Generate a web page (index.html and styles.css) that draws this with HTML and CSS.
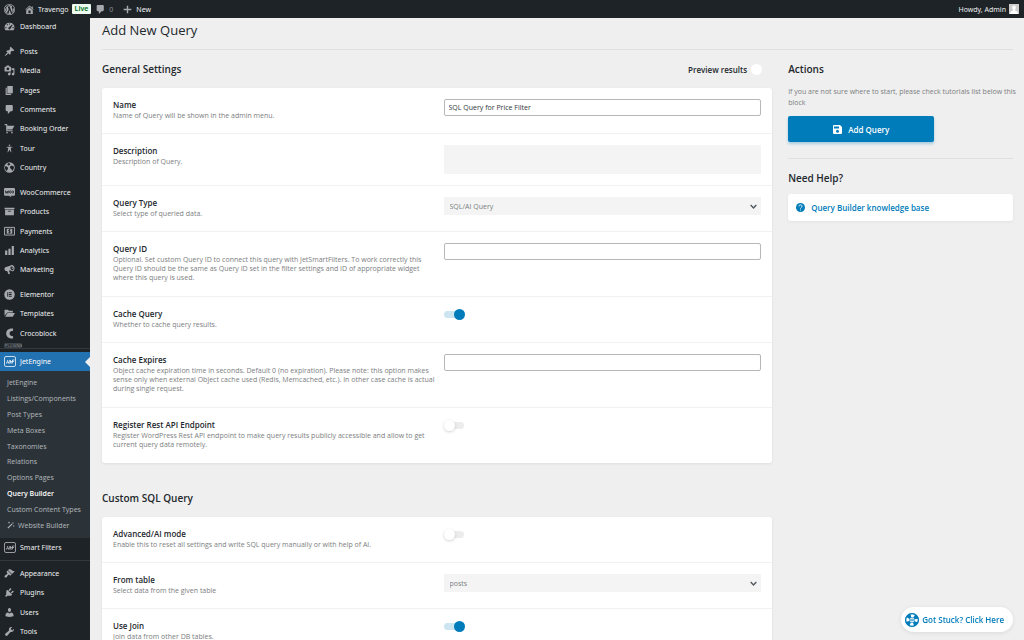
FILE: index.html
```html
<!DOCTYPE html>
<html lang="en">
<head>
<meta charset="utf-8">
<title>Add New Query</title>
<link rel="stylesheet" href="styles.css">
</head>
<body>
<header class="topbar">
  <a class="top-item" href="#" aria-label="WordPress"><svg class="icon top-logo" viewBox="0 0 20 20"><path fill-rule="evenodd" d="M10 0a10 10 0 1 0 0 20 10 10 0 0 0 0-20zm0 1.200a8.800 8.800 0 1 1 0 17.600A8.800 8.800 0 0 1 10 1.200z"/><path d="M2.900 6.800l4 10.800A8 8 0 0 1 2.900 6.800zM4 5.300a8 8 0 0 1 11.300-1.200c-1.300.2-1.700 1.600-1 2.900.8 1.300 1.400 2.400.7 4.700l-1 3.200-3.300-9.500 1-.2v-.6l-5.900.1v.5l1.200.2 1.500 4-2 5.800L3.600 5.900l1-.1zM10.200 10.900l2.500 6.800a8 8 0 0 1-4.900.1zM17 6.200a8 8 0 0 1-3 10.700l2.500-7.100c.4-1.300.6-2.400.5-3.600z"/></svg></a>
  <a class="top-item" href="#"><svg class="icon" viewBox="0 0 20 20"><path d="M16 8.500l1.530 1.530-1.060 1.060L10 4.600l-6.470 6.490-1.060-1.060L10 2.500l4 4v-2h2v4zm-6-2.460l6 5.990V18H4v-5.970zM12 17v-5H8v5h4z"/></svg>Travengo</a>
  <span class="live">Live</span>
  <a class="top-item top-count" href="#"><svg class="icon" viewBox="0 0 20 20"><path d="M5 2h9c1.100 0 2 .9 2 2v7c0 1.100-.9 2-2 2h-2l-5 5v-5H5c-1.100 0-2-.9-2-2V4c0-1.100.9-2 2-2z"/></svg>0</a>
  <a class="top-item top-new" href="#"><svg class="icon" viewBox="0 0 20 20"><path d="M8.700 3h2.600v5.700H17v2.600h-5.700V17H8.700v-5.700H3V8.700h5.700z"/></svg>New</a>
  <a class="top-item top-user" href="#">Howdy, Admin<svg class="avatar" viewBox="0 0 20 20"><path fill="#ccc" d="M0 0h20v20H0z"/><path fill="#fff" d="M10 3c3 0 4 2.200 3.500 5-.3 1.800-1 3-1.800 3.500v1.500c3 .8 6 2 6.300 7H2c.3-5 3.300-6.200 6.300-7v-1.500C7.500 11 6.800 9.800 6.500 8 6 5.200 7 3 10 3z"/></svg></a>
</header>

<div class="shell">
<nav class="sidebar" aria-label="Admin menu">
  <div class="group group-first">
    <a class="item" href="#"><svg class="icon" viewBox="0 0 20 20"><path fill-rule="evenodd" d="M10 3a9 9 0 0 0-9 9c0 2 .6 3.600 1.600 5h14.800c1-1.400 1.600-3 1.600-5a9 9 0 0 0-9-9zM9 4.500h2v2H9zM4.500 7l1.400-1.400L7.300 7 5.900 8.400zM2.500 11h2v2h-2zM15.500 11h2v2h-2zM14.800 6.300l1 1-4 6.200a2 2 0 1 1-2.700-2.300z"/></svg>Dashboard</a>
  </div>
  <div class="group group-content">
    <a class="item" href="#"><svg class="icon" viewBox="0 0 20 20"><path d="M10.440 3.020l1.820-1.820 6.360 6.350-1.830 1.820c-1.050-.68-2.480-.57-3.410.36l-.75.75c-.92.93-1.040 2.350-.35 3.410l-1.830 1.820-2.410-2.410-2.800 2.790c-.42.42-3.380 2.710-3.800 2.290s1.860-3.390 2.280-3.810l2.790-2.790L4.100 9.360l1.830-1.820c1.050.69 2.480.57 3.400-.36l.75-.75c.93-.92 1.050-2.350.36-3.410z"/></svg>Posts</a>
    <a class="item" href="#"><svg class="icon" viewBox="0 0 20 20"><path fill-rule="evenodd" d="M13 11V4c0-.55-.45-1-1-1h-1.670L9 1H5L3.670 3H2c-.55 0-1 .45-1 1v7c0 .55.45 1 1 1h10c.55 0 1-.45 1-1zM7 4.500c1.380 0 2.500 1.120 2.500 2.500S8.380 9.500 7 9.500 4.500 8.380 4.500 7 5.620 4.500 7 4.500zM14 6h5v10.500c0 1.380-1.120 2.500-2.500 2.500S14 17.880 14 16.500s1.120-2.500 2.500-2.500c.17 0 .34.02.5.05V9h-3V6zm-4 8.050V13h2v3.500c0 1.380-1.120 2.500-2.500 2.500S7 17.880 7 16.500 8.120 14 9.500 14c.17 0 .34.02.5.05z"/></svg>Media</a>
    <a class="item" href="#"><svg class="icon" viewBox="0 0 20 20"><path d="M6 15V2h10v13H6zm-1 1h8v2H3V5h2v11z"/></svg>Pages</a>
    <a class="item" href="#"><svg class="icon" viewBox="0 0 20 20"><path d="M5 2h9c1.100 0 2 .9 2 2v7c0 1.100-.9 2-2 2h-2l-5 5v-5H5c-1.100 0-2-.9-2-2V4c0-1.100.9-2 2-2z"/></svg>Comments</a>
    <a class="item" href="#"><svg class="icon" viewBox="0 0 20 20"><path d="M6 13h9c.55 0 1 .45 1 1s-.45 1-1 1H5c-.55 0-1-.45-1-1V4H2c-.55 0-1-.45-1-1s.45-1 1-1h3c.55 0 1 .45 1 1v2h13l-4 7H6v1zm-.5 3c.83 0 1.500.67 1.500 1.500S6.330 19 5.500 19 4 18.330 4 17.500 4.670 16 5.500 16zm9 0c.83 0 1.500.67 1.500 1.500s-.67 1.500-1.500 1.500-1.500-.67-1.500-1.500.67-1.500 1.500-1.500z"/></svg>Booking Order</a>
    <a class="item" href="#"><svg class="icon" viewBox="0 0 20 20"><path d="M10 2.600c.83 0 1.500.67 1.500 1.500s-.67 1.510-1.500 1.510c-.82 0-1.500-.68-1.500-1.510s.68-1.500 1.500-1.500zM3.400 7.360c0-.65 6.600-.76 6.600-.76s6.600.11 6.600.76-4.470 1.400-4.470 1.400 1.690 8.140 1.060 8.380c-.62.24-3.190-5.190-3.190-5.190s-2.560 5.430-3.180 5.190c-.63-.24 1.060-8.380 1.060-8.380S3.400 8.010 3.400 7.360z"/></svg>Tour</a>
    <a class="item" href="#"><svg class="icon" viewBox="0 0 20 20"><circle cx="10" cy="10" r="9.500"/><path fill="#1d2327" d="M2 7.500l3 .5 2.500 2.500-.5 2.500-1.500 1.500.3 2.500A9 9 0 0 1 2 7.500zM8 2l3 .5.500 2L9 6.500 7 6 6 4zM11 8l3-1.500 3.500 1 .7 3-1.700 4-2 1.500-1-3-2.500-2z"/></svg>Country</a>
  </div>
  <div class="group group-shop">
    <a class="item" href="#"><svg class="icon" viewBox="0 0 20 20"><path d="M2 2h16a2 2 0 0 1 2 2v10a2 2 0 0 1-2 2h-6l2 3-5-3H2a2 2 0 0 1-2-2V4a2 2 0 0 1 2-2z"/><path fill="none" stroke="#1d2327" stroke-width="1.500" d="M2.500 6.500l1 5L6 7.500l1 4 1.500-5"/><ellipse cx="11.500" cy="9" rx="1.500" ry="2.300" fill="none" stroke="#1d2327" stroke-width="1.300"/><ellipse cx="16" cy="9" rx="1.500" ry="2.300" fill="none" stroke="#1d2327" stroke-width="1.300"/></svg>WooCommerce</a>
    <a class="item" href="#"><svg class="icon" viewBox="0 0 20 20"><path fill-rule="evenodd" d="M19 3v3H1V3h18zM2 7h16v10H2V7zm11 3V8.500H7V10h6z"/></svg>Products</a>
    <a class="item" href="#"><svg class="icon" viewBox="0 0 20 20"><path fill="none" stroke="#a7aaad" stroke-width="1.800" d="M1 2.500h18v14H1z"/><path d="M5 5h10v9H5z"/><path fill="none" stroke="#1d2327" stroke-width="1.500" d="M12 7H9.500a1.200 1.200 0 0 0 0 2.500h1a1.200 1.200 0 0 1 0 2.500H8M10 5.500v8"/></svg>Payments</a>
    <a class="item" href="#"><svg class="icon" viewBox="0 0 20 20"><path d="M18 18V2h-4v16h4zm-6 0V7H8v11h4zm-6 0v-8H2v8h4z"/></svg>Analytics</a>
    <a class="item" href="#"><svg class="icon" viewBox="0 0 20 20"><path fill-rule="evenodd" d="M11 3c3-2 6-1 7.500 2s.5 7-2 8c-2 .7-4-.3-5-1.500l-2.500.6 2 5.500-2.800 1-2.500-6C3 13 1.500 12 1 10S1.500 6 4 5.500zm2 1.500c-1.500.7-1.500 3-.8 4.600s2 2.900 3.600 2.300c1.500-.7 1.800-3 1-4.800S14.500 4 13 4.500zM14 6.500l2 .5-.2 2-1.500.5z"/></svg>Marketing</a>
  </div>
  <div class="group group-build">
    <a class="item" href="#"><svg class="icon" viewBox="0 0 20 20"><circle cx="10" cy="10" r="9.500"/><path fill="#1d2327" d="M6 6h1.700v8H6zM9 6h5v1.600H9zM9 9.200h5v1.600H9zM9 12.400h5V14H9z"/></svg>Elementor</a>
    <a class="item" href="#"><svg class="icon" viewBox="0 0 20 20"><path d="M1 14V3h6l2 2h7v3H6zM6.500 9H20l-4 7H2z"/></svg>Templates</a>
    <a class="item" href="#"><svg class="icon" viewBox="0 0 20 20"><path d="M16.500 1C9 .5 4 4 4 10s5 9.500 12.500 9v-4C13 15 10 13.500 10 10s3-5 6.500-5z"/></svg>Crocoblock</a>
  </div>
  <div class="divider-label"><span>PLUGINS</span></div>
  <a class="item item-current" href="#"><svg class="icon icon-jet" viewBox="0 0 24 22"><rect x="1" y="1" width="22" height="20" rx="3"/><path d="M4 14h2l1.500-6M8 14h4.500V8L8 14M12 11h4M13 14h4M17 14V8h4M17 11h3"/></svg>JetEngine</a>
  <div class="submenu">
    <a href="#">JetEngine</a>
    <a href="#">Listings/Components</a>
    <a href="#">Post Types</a>
    <a href="#">Meta Boxes</a>
    <a href="#">Taxonomies</a>
    <a href="#">Relations</a>
    <a href="#">Options Pages</a>
    <a class="sub-current" href="#">Query Builder</a>
    <a href="#">Custom Content Types</a>
    <a class="sub-wand" href="#"><svg class="wand" viewBox="0 0 20 20"><path d="M1 17L12 6l2 2L3 19zM13 5l2-2 2 2-2 2zM5 1l1 2 2 1-2 1-1 2-1-2-2-1 2-1zM17 10l.8 1.700 1.700.8-1.700.8L17 15l-.8-1.700-1.700-.8 1.700-.8z"/></svg>Website Builder</a>
  </div>
  <a class="item" href="#"><svg class="icon icon-jet" viewBox="0 0 24 22"><rect x="1" y="1" width="22" height="20" rx="3"/><path d="M4 14h2l1.500-6M8 14h4.500V8L8 14M12 11h4M13 14h4M17 14V8h4M17 11h3"/></svg>Smart Filters</a>
  <div class="rule"></div>
  <div class="group group-admin">
    <a class="item" href="#"><svg class="icon" viewBox="0 0 20 20"><path d="M14.480 11.060L7.410 3.990l1.500-1.500c.5-.56 2.300-.47 3.510.32 1.210.8 1.430 1.280 2.910 2.100 1.180.64 2.450 1.260 4.450.85zm-.71.71L6.700 4.700 4.930 6.470c-.39.39-.39 1.020 0 1.410l1.060 1.060c.39.39.39 1.030 0 1.420-.6.6-1.430 1.110-2.210 1.690-.35.26-.7.53-1.010.84C1.430 14.230.4 16.080 1.400 17.070c.99 1 2.840-.03 4.180-1.360.31-.31.58-.66.85-1.020.57-.78 1.080-1.610 1.690-2.210.39-.39 1.020-.39 1.410 0l1.060 1.060c.39.39 1.020.39 1.410 0z"/></svg>Appearance</a>
    <a class="item" href="#"><svg class="icon" viewBox="0 0 20 20"><path d="M13.110 4.360L9.870 7.600 8 5.730l3.240-3.240c.35-.34 1.050-.2 1.560.32.52.51.66 1.210.31 1.550zm-8 1.770l.91-1.120 9.010 9.010-1.190.84c-.71.71-2.630 1.160-3.820 1.160H6.140L4.900 17.260c-.59.59-1.540.59-2.120 0-.59-.58-.59-1.530 0-2.120l1.240-1.240v-3.880c0-1.130.4-3.190 1.090-3.890zm7.260 3.970l3.240-3.240c.34-.35 1.040-.21 1.550.31.52.51.66 1.210.31 1.550l-3.240 3.250z"/></svg>Plugins</a>
    <a class="item" href="#"><svg class="icon" viewBox="0 0 20 20"><path d="M10 9.250c-2.270 0-2.730-3.440-2.730-3.440C7 4.020 7.820 2 9.970 2c2.160 0 2.980 2.020 2.710 3.810 0 0-.41 3.440-2.680 3.440zm0 2.570L12.720 10c2.390 0 4.520 2.330 4.520 4.530v2.490s-3.650 1.130-7.240 1.130c-3.650 0-7.240-1.130-7.240-1.130v-2.490c0-2.250 1.940-4.480 4.470-4.480z"/></svg>Users</a>
    <a class="item" href="#"><svg class="icon" viewBox="0 0 20 20"><path d="M16.680 9.770c-1.340 1.340-3.300 1.670-4.950.99l-5.410 6.520c-.99.99-2.590.99-3.580 0s-.99-2.590 0-3.570l6.520-5.420c-.68-1.650-.35-3.610.99-4.950 1.280-1.280 3.120-1.620 4.720-1.060l-2.890 2.890 2.820 2.820 2.860-2.870c.53 1.580.18 3.390-1.080 4.650z"/></svg>Tools</a>
  </div>
</nav>

<main class="page">
  <h1 class="page-title">Add New Query</h1>
  <div class="columns">
    <div class="settings">
      <div class="section-head">
        <h2 class="heading">General Settings</h2>
        <label class="preview">Preview results<input class="switch switch-bare" type="checkbox"></label>
      </div>
      <section class="card">
        <div class="row">
          <div class="info"><label class="name" for="q-name">Name</label><p class="desc">Name of Query will be shown in the admin menu.</p></div>
          <div class="control"><input class="text" id="q-name" type="text" value="SQL Query for Price Filter"></div>
        </div>
        <div class="row">
          <div class="info"><label class="name" for="q-desc">Description</label><p class="desc">Description of Query.</p></div>
          <div class="control"><textarea class="area" id="q-desc"></textarea></div>
        </div>
        <div class="row">
          <div class="info"><label class="name" for="q-type">Query Type</label><p class="desc">Select type of queried data.</p></div>
          <div class="control"><span class="select-wrap"><select class="select" id="q-type"><option>SQL/AI Query</option></select><svg class="chevron" viewBox="0 0 10 6"><path d="M1 1l4 4 4-4"/></svg></span></div>
        </div>
        <div class="row row-long">
          <div class="info"><label class="name" for="q-id">Query ID</label><p class="desc">Optional. Set custom Query ID to connect this query with JetSmartFilters. To work correctly this Query ID should be the same as Query ID set in the filter settings and ID of appropriate widget where this query is used.</p></div>
          <div class="control"><input class="text" id="q-id" type="text"></div>
        </div>
        <div class="row">
          <div class="info"><label class="name" for="q-cache">Cache Query</label><p class="desc">Whether to cache query results.</p></div>
          <div class="control"><input class="switch" id="q-cache" type="checkbox" checked></div>
        </div>
        <div class="row row-long">
          <div class="info"><label class="name" for="q-exp">Cache Expires</label><p class="desc">Object cache expiration time in seconds. Default 0 (no expiration). Please note: this option makes sense only when external Object cache used (Redis, Memcached, etc.). In other case cache is actual during single request.</p></div>
          <div class="control"><input class="text" id="q-exp" type="text"></div>
        </div>
        <div class="row">
          <div class="info"><label class="name" for="q-rest">Register Rest API Endpoint</label><p class="desc">Register WordPress Rest API endpoint to make query results publicly accessible and allow to get current query data remotely.</p></div>
          <div class="control"><input class="switch" id="q-rest" type="checkbox"></div>
        </div>
      </section>

      <div class="section-head section-next">
        <h2 class="heading">Custom SQL Query</h2>
      </div>
      <section class="card">
        <div class="row">
          <div class="info"><label class="name" for="s-adv">Advanced/AI mode</label><p class="desc">Enable this to reset all settings and write SQL query manually or with help of AI.</p></div>
          <div class="control"><input class="switch" id="s-adv" type="checkbox"></div>
        </div>
        <div class="row">
          <div class="info"><label class="name" for="s-from">From table</label><p class="desc">Select data from the given table</p></div>
          <div class="control"><span class="select-wrap"><select class="select" id="s-from"><option>posts</option></select><svg class="chevron" viewBox="0 0 10 6"><path d="M1 1l4 4 4-4"/></svg></span></div>
        </div>
        <div class="row">
          <div class="info"><label class="name" for="s-join">Use Join</label><p class="desc">Join data from other DB tables.</p></div>
          <div class="control"><input class="switch" id="s-join" type="checkbox" checked></div>
        </div>
      </section>
    </div>

    <aside class="aside">
      <div class="section-head"><h2 class="heading">Actions</h2></div>
      <p class="hint">If you are not sure where to start, please check tutorials list below this block</p>
      <button class="add" type="button"><svg class="save" viewBox="0 0 18 18"><path fill-rule="evenodd" d="M2 0h12l4 4v12a2 2 0 0 1-2 2H2a2 2 0 0 1-2-2V2a2 2 0 0 1 2-2zm0 3v4h10V3zm7 6.500a3 3 0 1 0 0 6 3 3 0 0 0 0-6z"/></svg>Add Query</button>
      <h2 class="heading help-title">Need Help?</h2>
      <a class="help" href="#"><svg class="question" viewBox="0 0 20 20"><circle cx="10" cy="10" r="10" fill="#007cba"/><path fill="none" stroke="#fff" stroke-width="2" d="M6.500 7.500c0-4.500 7-4.500 7 0 0 2.500-3.500 2.500-3.500 5"/><circle cx="10" cy="15.500" r="1.300" fill="#fff"/></svg>Query Builder knowledge base</a>
    </aside>
  </div>
</main>
</div>

<button class="stuck" type="button"><svg class="buoy" viewBox="0 0 28 28"><circle cx="14" cy="14" r="14" fill="#007cba"/><circle cx="14" cy="14" r="9" fill="none" stroke="#fff" stroke-width="6" stroke-dasharray="7.070 7.070" stroke-dashoffset="3.530"/><circle cx="14" cy="14" r="12.500" fill="none" stroke="#007cba" stroke-width="2"/><circle cx="14" cy="14" r="5" fill="#fff"/><path fill="none" stroke="#007cba" stroke-width="1.500" d="M10 12.500h8M10 15.500h8"/></svg>Got Stuck? Click Here</button>
</body>
</html>
```
FILE: styles.css
```css
* { box-sizing: border-box; }
body {
  margin: 0;
  height: 100vh;
  overflow: hidden;
  display: flex;
  flex-direction: column;
  background: #efefef;
  color: #3c434a;
  font-family: "Open Sans", "Noto Sans", sans-serif;
  font-size: 7px;
}
a { color: inherit; text-decoration: none; }
h1, h2, p { margin: 0; }
button, input, textarea, select { font: inherit; margin: 0; }

.topbar {
  flex: none;
  display: flex;
  align-items: center;
  height: 18px;
  padding: 0 5px 0 4px;
  background: #1d2327;
  color: #f0f0f1;
  font-family: "Noto Sans", sans-serif;
}
.top-item { display: flex; align-items: center; gap: 3px; }
.top-item + .top-item { margin-left: 9px; }
.icon { flex: none; width: 11px; height: 11px; fill: #a7aaad; }
.live {
  margin: 0 4px 0 3px;
  padding: 0 3px;
  border-radius: 1px;
  background: #edfaef;
  color: #00701a;
  font-weight: 600;
  line-height: 10px;
}
.top-count { color: #8c8f94; }
.top-item.top-user { margin-left: auto; gap: 3px; }
.avatar { width: 10px; height: 10px; }

.shell { flex: 1; min-height: 0; display: flex; }
.sidebar {
  flex: none;
  width: 90px;
  background: #1d2327;
  color: #f0f0f1;
  font-family: "Noto Sans", sans-serif;
}
.group { display: flex; flex-direction: column; margin-bottom: 6px; }
.group .item { flex: 1; }
.group-content { min-height: 135px; }
.group-shop { min-height: 96px; }
.group-build { min-height: 58px; margin-bottom: 0; }
.group-admin { min-height: 77px; }
.item {
  display: flex;
  align-items: center;
  gap: 5px;
  min-height: 19px;
  padding-left: 4px;
}
.group-first .item { margin-top: -1px; }
.icon-jet { width: 12px; margin-right: -1px; fill: none; stroke: #c3c4c7; stroke-width: 1.5; }
.divider-label {
  height: 9px;
  padding-left: 4px;
  color: #a7aaad;
  font-size: 4px;
}
.divider-label span {
  display: block;
  width: 18px;
  border: 1px solid #3c434a;
  border-radius: 1px;
  line-height: 3px;
  text-align: center;
}
.divider-label::after { content: ""; display: block; height: 1px; margin-left: -4px; background: #32383d; }
.item-current { position: relative; background: #2271b1; color: #fff; }
.item-current .icon-jet { stroke: #fff; }
.item-current::after {
  content: "";
  position: absolute;
  right: 0;
  top: 5px;
  border: 5px solid transparent;
  border-right-color: #efefef;
  border-left: 0;
}
.submenu {
  display: flex;
  flex-direction: column;
  min-height: 167px;
  padding: 4px 0 5px;
  background: #2c3338;
  color: #b4b9be;
  font-family: "Open Sans", "Noto Sans", sans-serif;
}
.submenu a { flex: 1; display: flex; align-items: center; padding-left: 7px; white-space: nowrap; }
.submenu .sub-current { color: #fff; font-weight: 600; }
.wand { width: 8px; height: 8px; margin-right: 3px; fill: #b4b9be; }
.rule { height: 1px; margin: 3px 0; background: #32383d; }

.page { flex: 1; min-width: 0; padding: 0 11px 0 12px; }
.page-title {
  padding: 3px 0 10px;
  border-bottom: 1px solid #e0e0e0;
  color: #23282d;
  font-size: 13px;
  font-weight: 400;
  line-height: 18px;
}
.columns { display: grid; grid-template-columns: 149fr 50fr; gap: 16px; }
.section-head {
  display: flex;
  align-items: center;
  justify-content: space-between;
  height: 38px;
}
.section-next { height: 54px; padding-top: 16px; }
.heading { color: #23282d; font-size: 10px; font-weight: 600; line-height: 14px; }
.preview { display: flex; align-items: center; gap: 4px; padding-right: 10px; color: #23282d; font-size: 8px; font-weight: 600; }

.card { border-radius: 3px; background: #fff; box-shadow: 0 1px 3px rgba(35, 40, 45, 0.08); }
.row {
  display: grid;
  grid-template-columns: 51fr 49fr;
  padding: 11px 11px 13px;
  border-bottom: 1px solid #f1f1f1;
}
.row-long { padding-bottom: 14px; }
.row:last-child { padding-bottom: 14px; border-bottom: 0; }
.info { padding-right: 4px; }
.name { display: block; color: #23282d; font-size: 8px; font-weight: 600; line-height: 12px; }
.desc { color: #7b7e81; line-height: 9px; }
.control { display: flex; align-items: flex-start; height: 17px; }
.text {
  width: 100%;
  height: 17px;
  padding: 0 4px;
  border: 1px solid #b5b8bb;
  border-radius: 2px;
  background: #fff;
  color: #32373c;
}
.row:has(.area) { padding-bottom: 11px; }
.control:has(.area) { height: auto; }
.area { width: 100%; height: 29px; border: 0; background: #f4f4f4; resize: none; }
.select-wrap { position: relative; display: block; width: 100%; }
.select {
  display: block;
  width: 100%;
  height: 18px;
  padding: 0 6px;
  border: 0;
  appearance: none;
  background: #f4f4f4;
  color: #7b7e81;
}
.chevron {
  position: absolute;
  right: 4px;
  top: 7px;
  width: 7px;
  height: 5px;
  fill: none;
  stroke: #50575e;
  stroke-width: 2;
}
.switch {
  appearance: none;
  position: relative;
  width: 20px;
  height: 7px;
  margin-top: 3px;
  border-radius: 4px;
  background: #ececec;
}
.switch::after {
  content: "";
  position: absolute;
  left: 0;
  top: -2px;
  width: 11px;
  height: 11px;
  border-radius: 50%;
  background: #fff;
  box-shadow: 0 1px 3px rgba(35, 40, 45, 0.2);
}
.switch:checked { background: #cce5f1; }
.switch:checked::after { left: 10px; background: #007cba; box-shadow: none; }
.switch-bare { width: 11px; margin: 0; background: none; }
.switch-bare::after { box-shadow: none; }

.hint { margin: -2px -8px 8px 0; color: #7b7e81; line-height: 11px; }
.add {
  display: flex;
  align-items: center;
  justify-content: center;
  gap: 6px;
  width: 65%;
  height: 26px;
  border: 0;
  border-radius: 2px;
  background: #007cba;
  color: #fff;
  font-size: 8px;
  font-weight: 600;
  box-shadow: 0 2px 3px rgba(0, 124, 186, 0.3);
}
.save { width: 9px; height: 9px; fill: #fff; }
.help-title { margin-top: 16px; padding: 12px 0 9px; border-top: 1px solid #e0e0e0; }
.help {
  display: flex;
  align-items: center;
  gap: 6px;
  height: 27px;
  padding: 0 8px;
  border-radius: 3px;
  background: #fff;
  color: #007cba;
  font-size: 8px;
  font-weight: 600;
  box-shadow: 0 1px 3px rgba(35, 40, 45, 0.06);
}
.question { width: 9px; height: 9px; }
.stuck {
  position: fixed;
  right: 11px;
  bottom: 8px;
  display: flex;
  align-items: center;
  gap: 3px;
  height: 25px;
  padding: 0 9px 0 4px;
  border: 0;
  border-radius: 13px;
  background: #fff;
  color: #007cba;
  font-size: 8px;
  font-weight: 600;
  box-shadow: 0 1px 4px rgba(35, 40, 45, 0.1);
}
.buoy { width: 14px; height: 14px; }
```
